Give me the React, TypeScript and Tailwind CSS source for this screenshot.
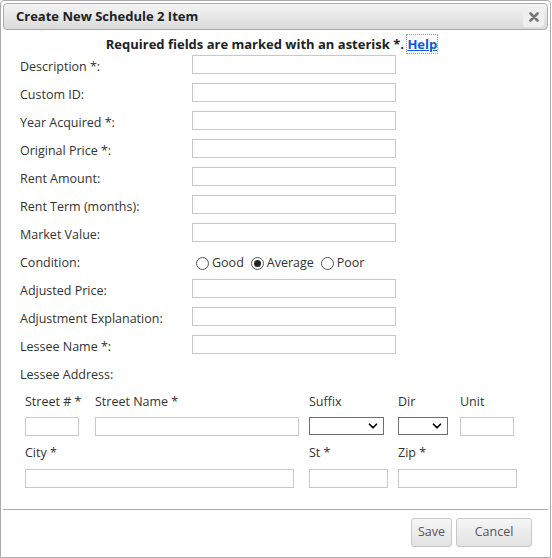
import { ChevronDown } from "lucide-react";

const rows = [
  "Description *:",
  "Custom ID:",
  "Year Acquired *:",
  "Original Price *:",
  "Rent Amount:",
  "Rent Term (months):",
  "Market Value:",
];

const rows2 = ["Adjusted Price:", "Adjustment Explanation:", "Lessee Name *:"];

const font = { fontFamily: '"Open Sans", "DejaVu Sans", sans-serif' };

function TextInput({ className = "" }: { className?: string }) {
  return <input type="text" className={`h-[19px] border border-[#c8c8c8] bg-white outline-none ${className}`} />;
}

function Select({ className = "" }: { className?: string }) {
  return (
    <div className={`relative h-[18px] border border-[#6f6f6f] bg-white ${className}`}>
      <ChevronDown className="absolute right-[3px] top-[1px] w-[14px] h-[14px] text-black" strokeWidth={3} />
    </div>
  );
}

function Radio({ checked, label }: { checked?: boolean; label: string }) {
  return (
    <label className="flex items-center gap-[3px]">
      <span className="flex items-center justify-center w-[13px] h-[13px] rounded-full border border-[#555] bg-white">
        {checked && <span className="w-[7px] h-[7px] rounded-full bg-[#222]" />}
      </span>
      <span>{label}</span>
    </label>
  );
}

function FormRow({ label, children }: { label: string; children?: React.ReactNode }) {
  return (
    <div className="flex items-center h-[28px]">
      <div className="w-[172px] mt-[6px]">{label}</div>
      {children}
    </div>
  );
}

export default function App() {
  return (
    <div className="w-[552px] h-[558px] bg-white text-[12.5px] text-[#333]" style={font}>
      <div className="w-[551px] h-[558px] border border-[#aaa] rounded-t-[4px] p-[2px] flex flex-col">
        {/* title bar */}
        <div className="h-[27px] shrink-0 flex items-center justify-between rounded-[4px] border border-[#aaa] bg-gradient-to-b from-[#f4f4f4] to-[#dadada] pl-[12px] pr-[3px]">
          <span className="font-bold text-[13px] text-[#222] mt-[1px]">Create New Schedule 2 Item</span>
          <button className="w-[21px] h-[20px] flex items-center justify-center rounded-[3px] bg-[#efefef] text-[#777]">
            <svg width="10" height="10" viewBox="0 0 10 10">
              <path d="M1.5 1.5 L8.5 8.5 M8.5 1.5 L1.5 8.5" stroke="currentColor" strokeWidth="2.6" strokeLinecap="round" />
            </svg>
          </button>
        </div>

        <div className="flex-1 flex flex-col">
          <p className="mt-[6px] h-[16px] leading-[16px] text-center font-bold text-[13px] text-[#222] pr-[8px]">
            Required fields are marked with an asterisk *.{" "}
            <a href="#" className="text-[#0b59d6] underline outline-1 outline-dotted outline-[#8898c8]">
              Help
            </a>
          </p>

          <div className="pl-[17px] mt-[-2px]">
            {rows.map((r) => (
              <FormRow key={r} label={r}>
                <TextInput className="w-[204px]" />
              </FormRow>
            ))}
            <FormRow label="Condition:">
              <div className="flex items-center gap-[7px] mt-[6px] ml-[4px]">
                <Radio label="Good" />
                <Radio label="Average" checked />
                <Radio label="Poor" />
              </div>
            </FormRow>
            {rows2.map((r) => (
              <FormRow key={r} label={r}>
                <TextInput className="w-[204px]" />
              </FormRow>
            ))}
            <FormRow label="Lessee Address:" />
          </div>

          <div className="pl-[22px] mt-[5px] grid grid-cols-[70px_214px_89px_62px_1fr] gap-y-[7px] leading-[18px]">
            <div className="h-[18px] pt-[2px]">Street # *</div>
            <div className="h-[18px] pt-[2px]">Street Name *</div>
            <div className="h-[18px] pt-[2px]">Suffix</div>
            <div className="h-[18px] pt-[2px]">Dir</div>
            <div className="h-[18px] pt-[2px]">Unit</div>
            <TextInput className="w-[54px] h-[18px] mt-[1px]" />
            <TextInput className="w-[204px] h-[18px] mt-[1px]" />
            <Select className="w-[75px] mt-[1px]" />
            <Select className="w-[50px] mt-[1px]" />
            <TextInput className="w-[54px] h-[18px] mt-[1px]" />
            <div className="col-span-2 h-[18px] pt-[1px]">City *</div>
            <div className="h-[18px] pt-[1px]">St *</div>
            <div className="col-span-2 h-[18px] pt-[1px]">Zip *</div>
            <TextInput className="col-span-2 w-[269px] h-[18px] mt-[1px]" />
            <TextInput className="w-[79px] h-[18px] mt-[1px]" />
            <TextInput className="col-span-2 w-[119px] h-[18px] mt-[1px]" />
          </div>

          <div className="mt-[21px] border-t border-[#aaa] flex justify-end gap-[4px] pt-[8px] pr-[16px]">
            <button className="w-[41px] h-[29px] rounded-[3px] border border-[#c8c8c8] bg-gradient-to-b from-[#f6f6f6] to-[#e2e2e2] text-[#555]">
              Save
            </button>
            <button className="w-[76px] h-[29px] rounded-[3px] border border-[#c8c8c8] bg-gradient-to-b from-[#f6f6f6] to-[#e2e2e2] text-[#555]">
              Cancel
            </button>
          </div>
        </div>
      </div>
    </div>
  );
}
